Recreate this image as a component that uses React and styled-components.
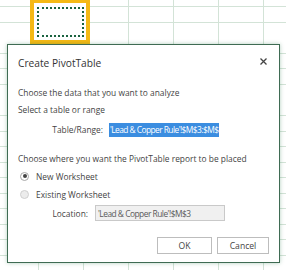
import React from "react";
import styled, { createGlobalStyle } from "styled-components";

const GlobalStyle = createGlobalStyle`
  *, *::before, *::after {
    box-sizing: border-box;
  }
  html, body {
    margin: 0;
    padding: 0;
    background: #ffffff;
  }
  body {
    font-family: "Open Sans", "Noto Sans", sans-serif;
  }
`;

const Sheet = styled.div`
  position: relative;
  width: 286px;
  height: 270px;
  overflow: hidden;
  background-color: #ffffff;
  background-image:
    repeating-linear-gradient(to right, transparent 0, transparent 38px, #d3e3d7 38px, #d3e3d7 39px, transparent 39px, transparent 45px),
    repeating-linear-gradient(to bottom, transparent 0, transparent 6.5px, #d3e3d7 6.5px, #d3e3d7 7.5px, transparent 7.5px, transparent 15.5px);
`;

const ActiveCell = styled.div`
  position: absolute;
  left: 30px;
  top: -1px;
  width: 60px;
  height: 45px;
  border: 4px solid #f5b915;
  background: #ffffff;
  display: flex;
  align-items: center;
  justify-content: center;
`;

const CopyMarquee = styled.div`
  width: 47px;
  height: 30px;
  border: 2px dotted #1a6340;
`;

const Dialog = styled.div`
  position: absolute;
  left: 7px;
  top: 44px;
  width: 273px;
  height: 219px;
  border: 1px solid #3f6b53;
  background: #ffffff;
  box-shadow: 0 0 4px rgba(33, 115, 70, 0.35);
  display: flex;
  flex-direction: column;
  padding: 0 10px;
  color: #444444;
  font-size: 8.4px;
`;

const Header = styled.div`
  display: flex;
  align-items: center;
  justify-content: space-between;
  height: 16px;
  margin-top: 10px;
`;

const Title = styled.div`
  font-size: 10.2px;
  color: #333333;
`;

const CloseButton = styled.div`
  width: 10px;
  height: 10px;
  margin-right: 1px;
  margin-top: -4px;
  display: flex;
  align-items: center;
  justify-content: center;
`;

const Line = styled.div`
  line-height: 15px;
  height: 15px;
  white-space: nowrap;
  margin-top: ${(p) => p.$gap || 0}px;
`;

const FieldRow = styled.div`
  display: flex;
  align-items: center;
  height: ${(p) => p.$h}px;
  margin-top: ${(p) => p.$gap}px;
`;

const FieldLabel = styled.div`
  width: ${(p) => p.$w}px;
  text-align: right;
  margin-right: ${(p) => p.$space}px;
  white-space: nowrap;
`;

const RangeInput = styled.div`
  flex: 1;
  height: 17px;
  display: flex;
  align-items: center;
  padding-left: 1px;
`;

const Selected = styled.span`
  background: #3b8de0;
  color: #ffffff;
  line-height: 14px;
  padding: 0 1px;
  letter-spacing: -0.55px;
  white-space: nowrap;
`;

const LocationInput = styled.div`
  width: 130px;
  height: 16px;
  border: 1px solid #c9c9c9;
  background: #f0f0f0;
  color: #5a5a5a;
  display: flex;
  align-items: center;
  padding-left: 2px;
  letter-spacing: -0.5px;
  white-space: nowrap;
`;

const RadioRow = styled.div`
  display: flex;
  align-items: center;
  height: 16px;
  margin-top: ${(p) => p.$gap}px;
`;

const RadioDot = styled.span`
  width: 9px;
  height: 9px;
  border-radius: 50%;
  border: 1px solid ${(p) => (p.$on ? "#a8a8a8" : "#d0d0d0")};
  background: ${(p) => (p.$on ? "#ffffff" : "#ececec")};
  margin-left: 2px;
  margin-right: 7px;
  display: flex;
  align-items: center;
  justify-content: center;
  &::after {
    content: "";
    width: 4px;
    height: 4px;
    border-radius: 50%;
    background: ${(p) => (p.$on ? "#444444" : "transparent")};
  }
`;

const Footer = styled.div`
  display: flex;
  justify-content: flex-end;
  gap: 5px;
  margin-top: 16px;
`;

const Button = styled.div`
  width: ${(p) => p.$w}px;
  height: 17px;
  border: 1px solid #bdbdbd;
  background: #ffffff;
  color: #444444;
  display: flex;
  align-items: center;
  justify-content: center;
  font-size: 8.6px;
`;

export default function App() {
  return (
    <>
      <GlobalStyle />
      <Sheet>
        <ActiveCell>
          <CopyMarquee />
        </ActiveCell>
        <Dialog>
          <Header>
            <Title>Create PivotTable</Title>
            <CloseButton>
              <svg width="7" height="7" viewBox="0 0 7 7">
                <path d="M0.5 0.5 L6.5 6.5 M6.5 0.5 L0.5 6.5" stroke="#444" strokeWidth="1.3" />
              </svg>
            </CloseButton>
          </Header>
          <Line $gap={14}>Choose the data that you want to analyze</Line>
          <Line $gap={2}>Select a table or range</Line>
          <FieldRow $h={17} $gap={4}>
            <FieldLabel $w={85} $space={5}>Table/Range:</FieldLabel>
            <RangeInput>
              <Selected>'Lead &amp; Copper Rule'!$M$3:$M$</Selected>
            </RangeInput>
          </FieldRow>
          <Line $gap={13}>Choose where you want the PivotTable report to be placed</Line>
          <RadioRow $gap={2}>
            <RadioDot $on />
            New Worksheet
          </RadioRow>
          <RadioRow $gap={2}>
            <RadioDot />
            Existing Worksheet
          </RadioRow>
          <FieldRow $h={16} $gap={3}>
            <FieldLabel $w={70} $space={7}>Location:</FieldLabel>
            <LocationInput>'Lead &amp; Copper Rule'!$M$3</LocationInput>
          </FieldRow>
          <Footer>
            <Button $w={55}>OK</Button>
            <Button $w={52}>Cancel</Button>
          </Footer>
        </Dialog>
      </Sheet>
    </>
  );
}
